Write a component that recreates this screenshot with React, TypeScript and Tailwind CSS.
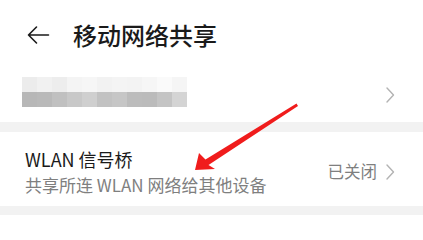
const FONT = "font-['Noto_Sans_CJK_SC','Noto_Sans',sans-serif]";

// pixelated placeholder for the hidden network name
const topCells = [
  "bg-[#ececec]", "bg-[#f1f1f1]", "bg-[#ededed]", "bg-[#f4f4f4]", "bg-[#f6f6f6]", "bg-[#f2f2f2]",
  "bg-[#f4f4f4]", "bg-[#f3f3f3]", "bg-[#f6f6f6]", "bg-[#fafafa]", "bg-[#f5f5f5]",
];
const bottomCells = [
  "bg-[#b7b7b7]", "bg-[#b9b9b9]", "bg-[#c0c0c0]", "bg-[#c8c8c8]", "bg-[#cfcfcf]", "bg-[#c2c2c2]",
  "bg-[#c6c6c6]", "bg-[#bcbcbc]", "bg-[#bbbbbb]", "bg-[#c4c4c4]", "bg-[#d4d4d4]",
];

const Chevron = () => (
  <svg width="10" height="16" viewBox="0 0 10 16" fill="none" className="shrink-0">
    <path d="M2 1 L8.5 8 L2 15" stroke="#b3b3b3" strokeWidth="1.4" strokeLinecap="round" strokeLinejoin="round" />
  </svg>
);

export default function App() {
  return (
    <div className={`relative h-[225px] w-[423px] overflow-hidden bg-white ${FONT}`}>
      <header className="flex h-[70px] items-center pl-[26px]">
        <svg width="24" height="20" viewBox="0 0 24 20" fill="none" className="shrink-0">
          <path d="M22.5 10 H2.5 M10.5 2 L2.5 10 L10.5 18" stroke="#1a1a1a" strokeWidth="1.6" strokeLinecap="round" strokeLinejoin="round" />
        </svg>
        <h1 className="ml-[23px] text-[24px] leading-none font-medium text-[#1a1a1a]">移动网络共享</h1>
      </header>

      <div className="flex h-[52px] items-start justify-between pl-[22px] pr-[28px] pt-[7px]">
        <div className="flex flex-col">
          <div className="flex h-[15px]">
            {topCells.map((c, i) => (
              <div key={i} className={`h-full w-[15px] ${c}`} />
            ))}
          </div>
          <div className="flex h-[15px]">
            {bottomCells.map((c, i) => (
              <div key={i} className={`h-full w-[15px] ${c}`} />
            ))}
          </div>
        </div>
        <div className="mt-[10px]">
          <Chevron />
        </div>
      </div>

      <div className="h-[10px] bg-[#f2f2f2]" />

      <div className="flex h-[74px] items-center justify-between pl-[25px] pr-[28px] pt-[5px]">
        <div className="flex flex-col">
          <span className="text-[18px] leading-[24px] text-[#1a1a1a]">WLAN 信号桥</span>
          <span className="mt-[3px] text-[17px] leading-[22px] text-[#7f7f7f]">共享所连 WLAN 网络给其他设备</span>
        </div>
        <div className="flex items-center gap-[8px]">
          <span className="text-[16.5px] leading-none text-[#7f7f7f]">已关闭</span>
          <Chevron />
        </div>
      </div>

      <div className="h-[9px] bg-[#f2f2f2]" />

      {/* red annotation arrow drawn over the screenshot */}
      <svg className="pointer-events-none absolute left-0 top-0" width="423" height="225" viewBox="0 0 423 225">
        <polygon
          points="195,170 199,153 205.5,159.5 296.5,103.5 298,106 208.5,165 215,169"
          fill="#f01c1c"
        />
      </svg>
    </div>
  );
}
